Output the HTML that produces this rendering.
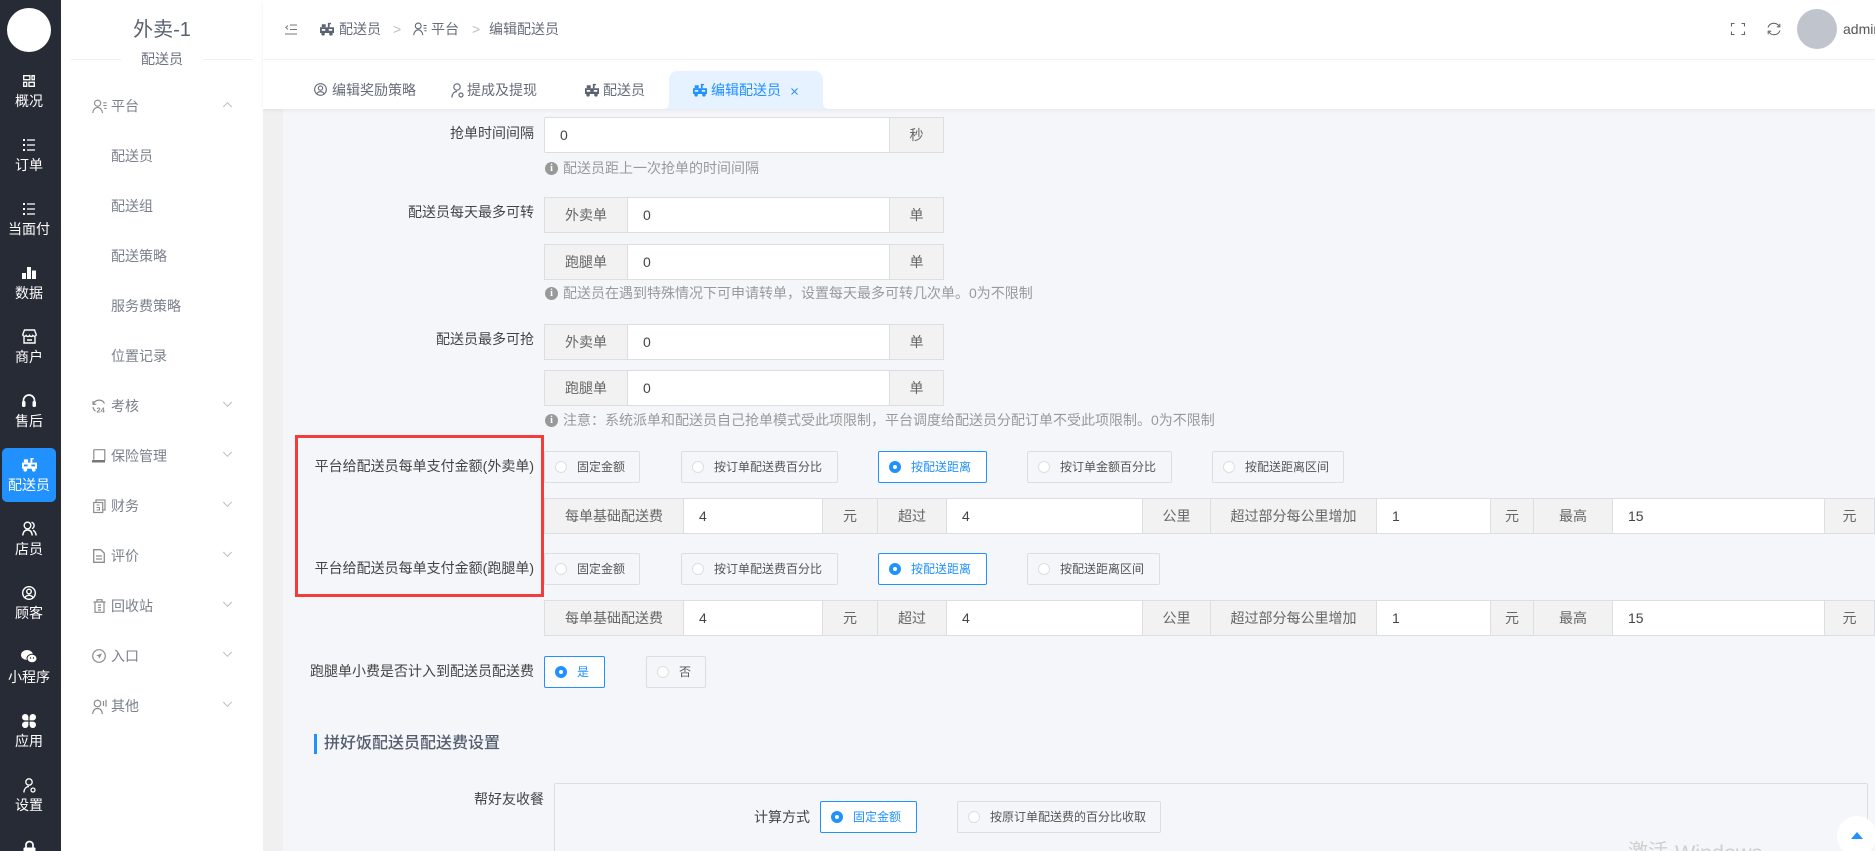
<!DOCTYPE html>
<html lang="zh-CN">
<head>
<meta charset="utf-8">
<title>编辑配送员</title>
<style>
*,*:before,*:after{box-sizing:border-box}
html,body{margin:0;padding:0;width:1875px;height:851px;overflow:hidden;background:#f5f6fa}
body{position:relative;font-family:"Liberation Sans","Noto Sans CJK SC",sans-serif;font-size:14px;color:#444}
.a{position:absolute}
.t{position:absolute;line-height:20px;height:20px;white-space:nowrap}
svg{position:absolute;display:block;overflow:visible}
#dark{left:0;top:0;width:61px;height:851px;background:#272b35}
#sub{left:61px;top:0;width:202px;height:851px;background:#fff}
#strip{left:263px;top:109px;width:20px;height:742px;background:#f0f0f0}
#head{left:263px;top:0;width:1612px;height:109px;background:#fff;box-shadow:0 1px 4px rgba(0,0,0,.07)}
.s{position:absolute;left:0;width:58px;text-align:center;color:#fff;line-height:20px;height:20px;white-space:nowrap}
.i{fill:none;stroke:#fff;stroke-width:1.5}
.f{fill:#fff;stroke:none}
.m{position:absolute;left:111px;color:#7b808c;line-height:20px;height:20px;white-space:nowrap}
.g{fill:none;stroke:#8c8c8c;stroke-width:1.2}
.gf{fill:#8c8c8c;stroke:none}
.ch{fill:none;stroke:#bdbdbd;stroke-width:1}
.b{color:#666c7a}
.lb{position:absolute;left:263px;width:271px;text-align:right;line-height:20px;height:20px;color:#444;white-space:nowrap}
.c{position:absolute;height:36px;border:1px solid #dcdee2;line-height:34px;white-space:nowrap;background:#fff;color:#444}
.ad{background:#f2f2f2;text-align:center;color:#666}
.in{padding-left:15px}
.h{position:absolute;left:563px;line-height:20px;height:20px;color:#999;white-space:nowrap}
.hi{position:absolute;left:545px;width:13px;height:13px;border-radius:50%;background:#999;color:#fff;font:bold 10px/13px "Liberation Serif",serif;text-align:center}
.r{position:absolute;height:32px;border:1px solid #dcdee2;border-radius:2px;font-size:12px;line-height:30px;padding-left:32px;white-space:nowrap;color:#555}
.r:before{content:"";position:absolute;left:10px;top:9px;width:12px;height:12px;border-radius:50%;background:#fff;border:1px solid #dcdee2}
.on{border-color:#2191ff;color:#2191ff;background:#fff}
.on:before{border:4px solid #2191ff;background:#fff}
</style>
</head>
<body>
<svg width="0" height="0" style="position:absolute">
<defs>
<symbol id="truck" viewBox="0 0 16 16"><path fill-rule="evenodd" d="M0 6h16v6.500H0zM2 8v2h4V8zM10 8v2h4V8z" fill="currentColor"/><path d="M9 1h3.500v1.500H11V6H9zM2 2.500h4.500V6H2z" fill="currentColor"/><circle cx="3.500" cy="13.600" r="2" fill="currentColor"/><circle cx="12.500" cy="13.600" r="2" fill="currentColor"/></symbol>
<symbol id="plat" viewBox="0 0 16 16"><g fill="none" stroke="currentColor" stroke-width="1.200"><circle cx="6" cy="4.500" r="3.300"/><path d="M.8 15c.4-3.500 2.400-6 5.200-6s4.800 2.500 5.200 6"/><path d="M12 4h3.500M12 7h3.500M13 10h2.500"/></g></symbol>
<symbol id="list" viewBox="0 0 12 12"><g fill="none" stroke="#fff" stroke-width="1.300"><path d="M4 1h8M4 6h8M4 11h8"/></g><g fill="#fff"><rect x="0" y="0" width="2" height="2"/><rect x="0" y="5" width="2" height="2"/><rect x="0" y="10" width="2" height="2"/></g></symbol>
</defs>
</svg>

<div id="dark" class="a"></div>
<div class="a" style="left:7px;top:8px;width:44px;height:44px;border-radius:50%;background:#fff"></div>
<div class="a" style="left:2px;top:448px;width:54px;height:54px;border-radius:5px;background:#2191ff"></div>

<!-- dark sidebar icons -->
<svg style="left:23px;top:75px" width="12" height="12" viewBox="0 0 12 12" class="i"><path d="M.7.7h6.200v4H.7zM9 .7h2.300v4H9zM.7 7.300h3v4h-3zM6 7.300h5.300v4H6z" stroke-width="1.300"/></svg>
<svg style="left:23px;top:139px" width="12" height="12"><use href="#list"/></svg>
<svg style="left:23px;top:203px" width="12" height="12"><use href="#list"/></svg>
<svg style="left:22px;top:267px" width="14" height="12" viewBox="0 0 14 12" class="f"><path d="M0 6h4v6H0zM5 0h4v12H5zM10 3.500h4V12h-4z"/></svg>
<svg style="left:22px;top:329px" width="15" height="15" viewBox="0 0 15 15" class="i"><path d="M2.500 1h10l1.700 4.500c0 2-2.300 2.300-3.300 1-.7 1.300-2.700 1.300-3.400 0-.7 1.300-2.700 1.300-3.400 0-1 1.300-3.300 1-3.300-1zM2 8v6h11V8M5 11h5" stroke-width="1.400"/></svg>
<svg style="left:22px;top:394px" width="14" height="14" viewBox="0 0 14 14"><path d="M1.500 8V6.500a5.500 5.500 0 0 1 11 0V8" fill="none" stroke="#fff" stroke-width="1.700"/><rect x="0" y="7" width="3.500" height="6" rx="1.500" fill="#fff"/><rect x="10.500" y="7" width="3.500" height="6" rx="1.500" fill="#fff"/></svg>
<svg style="left:22px;top:457px;color:#fff" width="15" height="15"><use href="#truck"/></svg>
<svg style="left:22px;top:521px" width="15" height="15" viewBox="0 0 15 15" class="i"><circle cx="5.500" cy="4.500" r="3.300" stroke-width="1.400"/><path d="M.8 14.500c.3-3.500 2-5.500 4.700-5.500s4.400 2 4.700 5.500M9.500 1.300a3.300 3.300 0 0 1 .5 6.300M11 9.300c1.800.8 2.900 2.700 3.200 5.200" stroke-width="1.400"/></svg>
<svg style="left:22px;top:586px" width="14" height="14" viewBox="0 0 14 14" class="i"><circle cx="7" cy="7" r="6.300" stroke-width="1.400"/><circle cx="7" cy="5.500" r="2.300" stroke-width="1.400"/><path d="M2.800 11.800C3.800 10 5.300 9.300 7 9.300s3.200.7 4.200 2.500" stroke-width="1.400"/></svg>
<svg style="left:21px;top:650px" width="16" height="13" viewBox="0 0 16 13" class="f"><ellipse cx="6" cy="5" rx="6" ry="5"/><ellipse cx="11" cy="8.500" rx="5" ry="4.200" stroke="#272b35" stroke-width="1"/><circle cx="9.500" cy="8" r=".7" fill="#272b35"/><circle cx="12.500" cy="8" r=".7" fill="#272b35"/></svg>
<svg style="left:22px;top:714px" width="14" height="14" viewBox="0 0 14 14" class="f"><path d="M3.200 0a3.200 3.200 0 0 1 3.200 3.200v3.200H3.200a3.200 3.200 0 0 1 0-6.400zM10.800 0a3.200 3.200 0 0 1 0 6.400H7.600V3.200A3.200 3.200 0 0 1 10.800 0zM3.200 7.600h3.200v3.200a3.200 3.200 0 1 1-3.200-3.200zM7.600 7.600h3.200a3.200 3.200 0 1 1-3.200 3.200z"/></svg>
<svg style="left:23px;top:778px" width="13" height="15" viewBox="0 0 13 15" class="i"><circle cx="6" cy="4" r="3.200" stroke-width="1.300"/><path d="M.8 14.500C1.200 11 3 8.500 6 8.500" stroke-width="1.300"/><circle cx="10" cy="12" r="2" stroke-width="1.300"/></svg>
<svg style="left:23px;top:841px" width="13" height="15" viewBox="0 0 13 15"><path d="M3 7V4a3.500 3.500 0 0 1 7 0v3" fill="none" stroke="#fff" stroke-width="1.700"/><rect x="0.500" y="6.500" width="12" height="8.500" rx="1" fill="#fff"/></svg>

<div class="s" style="top:91px">概况</div>
<div class="s" style="top:155px">订单</div>
<div class="s" style="top:219px">当面付</div>
<div class="s" style="top:283px">数据</div>
<div class="s" style="top:347px">商户</div>
<div class="s" style="top:411px">售后</div>
<div class="s" style="top:475px">配送员</div>
<div class="s" style="top:539px">店员</div>
<div class="s" style="top:603px">顾客</div>
<div class="s" style="top:667px">小程序</div>
<div class="s" style="top:731px">应用</div>
<div class="s" style="top:795px">设置</div>

<!-- secondary menu -->
<div id="sub" class="a"></div>
<div class="t" style="left:61px;width:202px;top:17px;height:26px;line-height:26px;text-align:center;font-size:20px;color:#5a6170">外卖-1</div>
<div class="a" style="left:71px;top:59px;width:50px;height:1px;background:#f0f0f0"></div>
<div class="a" style="left:203px;top:59px;width:50px;height:1px;background:#f0f0f0"></div>
<div class="t" style="left:61px;width:202px;top:49px;text-align:center;color:#6b7180">配送员</div>

<div class="m" style="top:96px">平台</div>
<div class="m" style="top:146px">配送员</div>
<div class="m" style="top:196px">配送组</div>
<div class="m" style="top:246px">配送策略</div>
<div class="m" style="top:296px">服务费策略</div>
<div class="m" style="top:346px">位置记录</div>
<div class="m" style="top:396px">考核</div>
<div class="m" style="top:446px">保险管理</div>
<div class="m" style="top:496px">财务</div>
<div class="m" style="top:546px">评价</div>
<div class="m" style="top:596px">回收站</div>
<div class="m" style="top:646px">入口</div>
<div class="m" style="top:696px">其他</div>

<svg style="left:92px;top:99px;color:#8c8c8c" width="15" height="15"><use href="#plat"/></svg>
<svg style="left:92px;top:399px" width="14" height="14" viewBox="0 0 14 14" class="g"><path d="M1.500 5a6 6 0 0 1 11-.5M1 2v3.300h3.300M1 8c.3 2 1.200 3.300 2.500 4"/><text x="4.500" y="13.500" font-size="7.500" font-weight="bold" fill="#8c8c8c" stroke="none" font-family="Liberation Sans">24</text></svg>
<svg style="left:92px;top:449px" width="14" height="14" viewBox="0 0 14 14"><path d="M1.800.7h11v11" fill="none" stroke="#8c8c8c" stroke-width="1.200"/><path d="M1.800.7v10" fill="none" stroke="#8c8c8c" stroke-width="1.200"/><rect x="0" y="11" width="13" height="2.500" fill="#777"/></svg>
<svg style="left:93px;top:499px" width="13" height="14" viewBox="0 0 13 14" class="g"><path d="M3 3V1h9v10h-2" /><rect x=".7" y="3.500" width="9" height="10" fill="#fff"/><path d="M3.500 6h3M3.500 8.500h3v2.500h-3" stroke-width="1"/></svg>
<svg style="left:93px;top:549px" width="12" height="14" viewBox="0 0 12 14" class="g"><path d="M.7.7h7l3.600 3.600v9H.7z" stroke-width="1.300"/><path d="M3 7h6M3 10h6" stroke-width="1.200"/></svg>
<svg style="left:93px;top:599px" width="13" height="14" viewBox="0 0 13 14" class="g"><path d="M.5 3h12M2 3v10.300h9V3M4 3V.7h5V3M5 6h3M5 8.500h3M5 11h3"/></svg>
<svg style="left:92px;top:649px" width="14" height="14" viewBox="0 0 14 14"><circle cx="7" cy="7" r="6.300" fill="none" stroke="#8c8c8c" stroke-width="1.200"/><path d="M10 4.200 7.300 9.800 6.500 7.300 4.200 6.600z" fill="#8c8c8c"/></svg>
<svg style="left:92px;top:699px" width="15" height="15" viewBox="0 0 15 15" class="g"><circle cx="5.500" cy="4.500" r="3.300"/><path d="M.7 15c.3-3.500 2-5.500 4.800-5.500s4.500 2 4.800 5.500M11.500 2v5M14 .8v7"/></svg>

<svg style="left:223px;top:102px" width="9" height="6" viewBox="0 0 9 6" class="ch"><path d="M.3 5 4.500.7 8.700 5"/></svg>
<svg style="left:223px;top:401px" width="9" height="6" viewBox="0 0 9 6" class="ch"><path d="M.3 1 4.500 5.300 8.700 1"/></svg>
<svg style="left:223px;top:451px" width="9" height="6" viewBox="0 0 9 6" class="ch"><path d="M.3 1 4.500 5.300 8.700 1"/></svg>
<svg style="left:223px;top:501px" width="9" height="6" viewBox="0 0 9 6" class="ch"><path d="M.3 1 4.500 5.300 8.700 1"/></svg>
<svg style="left:223px;top:551px" width="9" height="6" viewBox="0 0 9 6" class="ch"><path d="M.3 1 4.500 5.300 8.700 1"/></svg>
<svg style="left:223px;top:601px" width="9" height="6" viewBox="0 0 9 6" class="ch"><path d="M.3 1 4.500 5.300 8.700 1"/></svg>
<svg style="left:223px;top:651px" width="9" height="6" viewBox="0 0 9 6" class="ch"><path d="M.3 1 4.500 5.300 8.700 1"/></svg>
<svg style="left:223px;top:701px" width="9" height="6" viewBox="0 0 9 6" class="ch"><path d="M.3 1 4.500 5.300 8.700 1"/></svg>

<div id="strip" class="a"></div>

<!-- content -->
<div class="lb" style="top:123px">抢单时间间隔</div>
<div class="c in" style="left:544px;top:117px;width:346px;border-radius:2px 0 0 2px">0</div>
<div class="c ad" style="left:889px;top:117px;width:55px">秒</div>
<div class="hi" style="top:162px">i</div><div class="h" style="top:158px">配送员距上一次抢单的时间间隔</div>

<div class="lb" style="top:202px">配送员每天最多可转</div>
<div class="c ad" style="left:544px;top:197px;width:84px">外卖单</div>
<div class="c in" style="left:627px;top:197px;width:263px">0</div>
<div class="c ad" style="left:889px;top:197px;width:55px">单</div>
<div class="c ad" style="left:544px;top:244px;width:84px">跑腿单</div>
<div class="c in" style="left:627px;top:244px;width:263px">0</div>
<div class="c ad" style="left:889px;top:244px;width:55px">单</div>
<div class="hi" style="top:287px">i</div><div class="h" style="top:283px">配送员在遇到特殊情况下可申请转单，设置每天最多可转几次单。0为不限制</div>

<div class="lb" style="top:329px">配送员最多可抢</div>
<div class="c ad" style="left:544px;top:324px;width:84px">外卖单</div>
<div class="c in" style="left:627px;top:324px;width:263px">0</div>
<div class="c ad" style="left:889px;top:324px;width:55px">单</div>
<div class="c ad" style="left:544px;top:370px;width:84px">跑腿单</div>
<div class="c in" style="left:627px;top:370px;width:263px">0</div>
<div class="c ad" style="left:889px;top:370px;width:55px">单</div>
<div class="hi" style="top:414px">i</div><div class="h" style="top:410px">注意：系统派单和配送员自己抢单模式受此项限制，平台调度给配送员分配订单不受此项限制。0为不限制</div>

<!-- row A -->
<div class="r" style="left:544px;top:451px;width:96px">固定金额</div>
<div class="r" style="left:681px;top:451px;width:157px">按订单配送费百分比</div>
<div class="r on" style="left:878px;top:451px;width:109px">按配送距离</div>
<div class="r" style="left:1027px;top:451px;width:145px">按订单金额百分比</div>
<div class="r" style="left:1212px;top:451px;width:132px">按配送距离区间</div>

<div class="c ad" style="left:544px;top:498px;width:140px">每单基础配送费</div>
<div class="c in" style="left:683px;top:498px;width:140px">4</div>
<div class="c ad" style="left:822px;top:498px;width:56px">元</div>
<div class="c ad" style="left:877px;top:498px;width:70px">超过</div>
<div class="c in" style="left:946px;top:498px;width:197px">4</div>
<div class="c ad" style="left:1142px;top:498px;width:69px">公里</div>
<div class="c ad" style="left:1210px;top:498px;width:167px">超过部分每公里增加</div>
<div class="c in" style="left:1376px;top:498px;width:115px">1</div>
<div class="c ad" style="left:1490px;top:498px;width:44px">元</div>
<div class="c ad" style="left:1533px;top:498px;width:80px">最高</div>
<div class="c in" style="left:1612px;top:498px;width:213px">15</div>
<div class="c ad" style="left:1824px;top:498px;width:51px;padding-right:0">元</div>

<!-- row B -->
<div class="r" style="left:544px;top:553px;width:96px">固定金额</div>
<div class="r" style="left:681px;top:553px;width:157px">按订单配送费百分比</div>
<div class="r on" style="left:878px;top:553px;width:109px">按配送距离</div>
<div class="r" style="left:1027px;top:553px;width:133px">按配送距离区间</div>

<div class="c ad" style="left:544px;top:600px;width:140px">每单基础配送费</div>
<div class="c in" style="left:683px;top:600px;width:140px">4</div>
<div class="c ad" style="left:822px;top:600px;width:56px">元</div>
<div class="c ad" style="left:877px;top:600px;width:70px">超过</div>
<div class="c in" style="left:946px;top:600px;width:197px">4</div>
<div class="c ad" style="left:1142px;top:600px;width:69px">公里</div>
<div class="c ad" style="left:1210px;top:600px;width:167px">超过部分每公里增加</div>
<div class="c in" style="left:1376px;top:600px;width:115px">1</div>
<div class="c ad" style="left:1490px;top:600px;width:44px">元</div>
<div class="c ad" style="left:1533px;top:600px;width:80px">最高</div>
<div class="c in" style="left:1612px;top:600px;width:213px">15</div>
<div class="c ad" style="left:1824px;top:600px;width:51px">元</div>

<!-- labels in red box -->
<div class="lb" style="left:263px;width:271px;top:456px">平台给配送员每单支付金额(外卖单)</div>
<div class="lb" style="left:263px;width:271px;top:558px">平台给配送员每单支付金额(跑腿单)</div>
<div class="a" style="left:295px;top:435px;width:249px;height:162px;border:3px solid #f33c3c"></div>

<div class="lb" style="left:263px;width:271px;top:661px">跑腿单小费是否计入到配送员配送费</div>
<div class="r on" style="left:544px;top:656px;width:61px">是</div>
<div class="r" style="left:646px;top:656px;width:60px">否</div>

<div class="a" style="left:314px;top:734px;width:3px;height:20px;background:#2191ff"></div>
<div class="t" style="left:324px;top:734px;font-size:16px;color:#555e6e;font-weight:500">拼好饭配送员配送费设置</div>

<div class="lb" style="left:263px;width:281px;top:789px">帮好友收餐</div>
<div class="a" style="left:554px;top:783px;width:1314px;height:90px;border:1px solid #dcdee2;border-radius:2px"></div>
<div class="t" style="left:754px;top:807px;color:#444">计算方式</div>
<div class="r on" style="left:820px;top:801px;width:97px">固定金额</div>
<div class="r" style="left:957px;top:801px;width:204px">按原订单配送费的百分比收取</div>

<div class="t" style="left:1628px;top:836px;height:32px;line-height:32px;font-size:20px;color:#cfcfcf">激活</div>
<div class="t" style="left:1675px;top:837px;height:32px;line-height:32px;font-size:21.500px;color:#cfcfcf">Windows</div>
<div class="a" style="left:1837px;top:816px;width:40px;height:40px;border-radius:50%;background:#fff"></div>
<svg style="left:1851px;top:832px" width="12" height="7" viewBox="0 0 12 7"><path d="M6 0 12 7H0z" fill="#2191ff"/></svg>

<!-- header -->
<div id="head" class="a"></div>
<div class="a" style="left:263px;top:59px;width:1612px;height:1px;background:#f1f1f1"></div>

<svg style="left:285px;top:24px" width="12" height="11" viewBox="0 0 12 11" fill="none" stroke="#777" stroke-width="1"><path d="M3 1.500.8 3.500 3 5.500M5 1h7M5 5.500h7M0 10h12"/></svg>
<svg style="left:320px;top:22px;color:#5b6272" width="14" height="14"><use href="#truck"/></svg>
<div class="t b" style="left:339px;top:19px">配送员</div>
<div class="t" style="left:393px;top:19px;color:#b8bcc6">&gt;</div>
<svg style="left:413px;top:22px;color:#5b6272" width="14" height="14"><use href="#plat"/></svg>
<div class="t b" style="left:431px;top:19px">平台</div>
<div class="t" style="left:472px;top:19px;color:#b8bcc6">&gt;</div>
<div class="t b" style="left:489px;top:19px">编辑配送员</div>

<svg style="left:1731px;top:23px" width="14" height="12" viewBox="0 0 14 12" fill="none" stroke="#666" stroke-width="1.100"><path d="M.5 3.500V.5h3M10.500.5h3v3M13.500 8.500v3h-3M3.500 11.500h-3v-3"/></svg>
<svg style="left:1767px;top:22px" width="14" height="14" viewBox="0 0 14 14" fill="none" stroke="#666" stroke-width="1.100"><path d="M1 5.500A6.200 6.200 0 0 1 12 4M13 8.500A6.200 6.200 0 0 1 2 10"/><path d="M12.800 1.800v3h-3M1.200 12.200v-3h3"/></svg>
<div class="a" style="left:1797px;top:9px;width:40px;height:40px;border-radius:50%;background:#c0c4cc"></div>
<div class="t" style="left:1843px;top:19px;color:#555">admin</div>

<svg style="left:314px;top:83px;color:#6b7180" width="13" height="13" viewBox="0 0 14 14" fill="none" stroke="#666c7a" stroke-width="1.200"><circle cx="7" cy="7" r="6.300"/><circle cx="7" cy="5.500" r="2.300"/><path d="M2.800 11.800C3.800 10 5.300 9.300 7 9.300s3.200.7 4.200 2.500"/></svg>
<div class="t b" style="left:332px;top:80px">编辑奖励策略</div>
<svg style="left:451px;top:83px" width="13" height="15" viewBox="0 0 13 15" fill="none" stroke="#666c7a" stroke-width="1.200"><circle cx="6" cy="4" r="3.200"/><path d="M.8 14.500C1.200 11 3 8.500 6 8.500"/><circle cx="10" cy="12" r="2"/></svg>
<div class="t b" style="left:467px;top:80px">提成及提现</div>
<svg style="left:585px;top:83px;color:#5b6272" width="14" height="14"><use href="#truck"/></svg>
<div class="t b" style="left:603px;top:80px">配送员</div>

<svg style="left:662px;top:71px" width="168" height="38" viewBox="0 0 168 38"><path d="M0 38c4 0 7-1 7-6V10C7 4 10 0 16 0h136c6 0 9 4 9 10v22c0 5 3 6 7 6z" fill="#e6f2ff"/></svg>
<svg style="left:693px;top:83px;color:#2191ff" width="14" height="14"><use href="#truck"/></svg>
<div class="t" style="left:711px;top:80px;color:#2191ff">编辑配送员</div>
<svg style="left:791px;top:88px" width="7" height="7" viewBox="0 0 7 7" fill="none" stroke="#2191ff" stroke-width="1"><path d="M.5.5l6 6M6.500.5l-6 6"/></svg>
</body>
</html>
